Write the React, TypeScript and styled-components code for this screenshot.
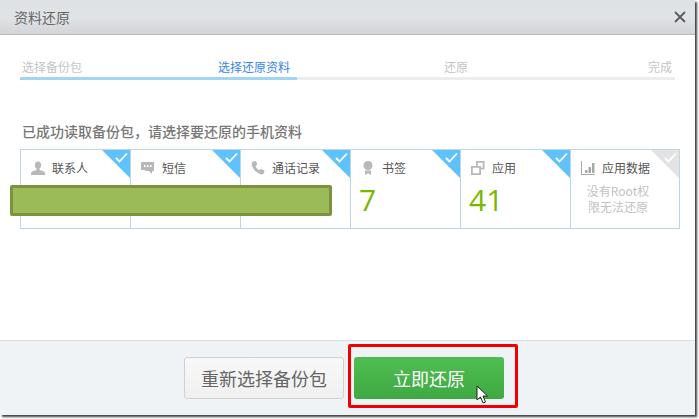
import React from "react";
import styled, { createGlobalStyle } from "styled-components";

const Global = createGlobalStyle`
  html, body {
    margin: 0;
    padding: 0;
    background: #fff;
    overflow: hidden;
  }
  body {
    width: 699px;
    height: 419px;
    font-family: "Noto Sans CJK SC", "Noto Sans", sans-serif;
  }
`;

const Window = styled.div`
  width: 695px;
  height: 415px;
  display: flex;
  flex-direction: column;
  background: #fff;
  box-shadow: 2px 2px 2px rgba(0, 0, 0, 0.75);
`;

const Header = styled.div`
  height: 34px;
  flex-shrink: 0;
  display: flex;
  align-items: center;
  justify-content: space-between;
  padding: 0 9px 0 14px;
  background: linear-gradient(#dfe2e5 0%, #e1e4e7 50%, #d2d4d6 100%);
  border-bottom: 1px solid #b4b9bb;
`;

const Title = styled.div`
  font-size: 14px;
  color: #666;
`;

const Close = styled.svg`
  width: 12px;
  height: 12px;
  display: block;
`;

const Body = styled.div`
  flex: 1;
  padding: 20px 20px 0;
  position: relative;
`;

const Steps = styled.div`
  display: grid;
  grid-template-columns: 196px 226px 204px 1fr;
  padding: 0 0 0 2px;
  height: 22px;
  align-items: center;
`;

const Step = styled.div<{ $active?: boolean }>`
  font-size: 12px;
  color: ${(p) => (p.$active ? "#3685ea" : "#c4c4c4")};
  white-space: nowrap;
`;

const Track = styled.div`
  height: 3px;
  background: #ededed;
`;

const TrackFill = styled.div`
  height: 100%;
  background: #a2d5f3;
`;

const Heading = styled.div`
  margin: 41px 0 0 2px;
  font-size: 14px;
  line-height: 20px;
  font-weight: 500;
  color: #777;
  white-space: nowrap;
`;

const Cards = styled.div`
  margin-top: 8px;
  display: flex;
  width: 660px;
`;

const Card = styled.div<{ $last?: boolean }>`
  width: 110px;
  height: 80px;
  box-sizing: border-box;
  border: 1px solid #bdd7e2;
  border-right-width: ${(p) => (p.$last ? "1px" : "0")};
  position: relative;
  overflow: hidden;
`;

const CardHead = styled.div`
  display: flex;
  align-items: center;
  height: 35px;
  padding-left: 9px;
  gap: 6px;
`;

const IconSlot = styled.svg`
  width: 16px;
  height: 16px;
  flex-shrink: 0;
  display: block;
`;

const CardName = styled.div`
  font-size: 12px;
  color: #555;
  white-space: nowrap;
`;

const Count = styled.div`
  font-family: "Open Sans", "Noto Sans", sans-serif;
  font-weight: 400;
  font-size: 30px;
  line-height: 30px;
  color: #7ab800;
  margin: 0 0 0 8px;
`;

const NoRoot = styled.div`
  font-size: 12px;
  line-height: 16px;
  color: #c2c2c2;
  text-align: center;
  padding: 0 28px 0 14px;
  margin-top: -2px;
`;

const Corner = styled.div<{ $off?: boolean }>`
  position: absolute;
  top: 0;
  right: 0;
  width: 28px;
  height: 28px;
  background: ${(p) => (p.$off ? "#e3e3e3" : "#60c2fd")};
  clip-path: polygon(0 0, 100% 0, 100% 100%);
`;

const Tick = styled.svg`
  position: absolute;
  top: 2px;
  right: 2px;
  width: 13px;
  height: 11px;
`;

const Redaction = styled.div`
  position: absolute;
  left: 10px;
  top: 150px;
  width: 322px;
  height: 31px;
  box-sizing: border-box;
  background: #9bbb59;
  border: 3px solid #7b933f;
  border-radius: 2px;
`;

const Footer = styled.div`
  height: 75px;
  flex-shrink: 0;
  box-sizing: border-box;
  display: flex;
  align-items: flex-start;
  gap: 10px;
  padding: 16px 0 0 184px;
  background: #f0f3f5;
  border-top: 1px solid #dcdfe1;
`;

const GhostButton = styled.div`
  width: 160px;
  height: 42px;
  box-sizing: border-box;
  display: flex;
  align-items: center;
  justify-content: center;
  font-size: 18px;
  color: #666;
  background: linear-gradient(#f8f8f8, #f0f0f0);
  border: 1px solid #cfd0d0;
  border-radius: 3px;
`;

const PrimaryButton = styled.div`
  width: 150px;
  height: 42px;
  display: flex;
  align-items: center;
  justify-content: center;
  font-size: 18px;
  color: #fff;
  background: linear-gradient(#4fbf52, #3fa842);
  border-radius: 3px;
  position: relative;
`;

const Highlight = styled.div`
  position: absolute;
  left: -6px;
  right: -14px;
  top: -13px;
  bottom: -9px;
  border: 3px solid #f00000;
  border-radius: 2px;
`;

const Pointer = styled.svg`
  position: absolute;
  left: 122px;
  top: 28px;
  width: 13px;
  height: 19px;
`;

const icons: Record<string, React.ReactNode> = {
  person: (
    <path d="M8 1.500c2 0 3.200 1.500 3.200 3.600 0 1.600-.8 3-1.700 3.700v1.200c2 .6 5 1.200 5.500 3V15H1v-2c.5-1.800 3.500-2.400 5.500-3V8.800C5.600 8.100 4.800 6.700 4.800 5.100 4.800 3 6 1.500 8 1.500z" fill="#b8b8b8" />
  ),
  chat: (
    <path fillRule="evenodd" d="M1 2h13v9h-2v3l-3-3H5v-1H1V2zm3 3v2h1.500V5H4zm3 0v2h1.500V5H7zm3 0v2h1.500V5H10z" fill="#b8b8b8" />
  ),
  phone: (
    <path d="M3 1.500 6 1l1.300 3.500L5.500 6c.6 1.700 2 3.300 3.800 4.300l1.500-1.500 3.700 2-.8 2.700c-.6.900-2 1.200-3.200.7C6 12.500 2.800 9 1.700 5 1.400 3.500 2 2.200 3 1.500z" fill="#b8b8b8" />
  ),
  medal: (
    <>
      <circle cx="8" cy="5.500" r="4.500" fill="#b8b8b8" />
      <path d="M5 10.500h6V15l-3-1.800L5 15z" fill="#b8b8b8" />
    </>
  ),
  apps: (
    <path fillRule="evenodd" d="M6 1h8.500v8.500H11V15H1V6h5V1zm1.800 5H11v1.800h1.700V2.800H7.800V6zM2.800 7.800v5.400h6.400V7.800H2.800z" fill="#b8b8b8" />
  ),
  chart: (
    <path d="M1 1h1v13h13v1H1V1zm4 9h2.500v3H5v-3zm3.500-3H11v6H8.500V7zM12 3h2.500v10H12V3z" fill="#a8a8a8" />
  ),
};

const items = [
  { name: "联系人", icon: "person" },
  { name: "短信", icon: "chat" },
  { name: "通话记录", icon: "phone" },
  { name: "书签", icon: "medal", count: 7 },
  { name: "应用", icon: "apps", count: 41 },
  { name: "应用数据", icon: "chart", off: true },
];

const App: React.FC = () => {
  return (
    <>
      <Global />
      <Window>
        <Header>
          <Title>资料还原</Title>
          <Close viewBox="0 0 12 12">
            <path d="M1 1l10 10M11 1 1 11" stroke="#5a5a5a" strokeWidth="1.800" />
          </Close>
        </Header>
        <Body>
          <Steps>
            <Step>选择备份包</Step>
            <Step $active>选择还原资料</Step>
            <Step>还原</Step>
            <Step>完成</Step>
          </Steps>
          <Track>
            <TrackFill style={{ width: `${(277 / 655) * 100}%` }} />
          </Track>
          <Heading>已成功读取备份包，请选择要还原的手机资料</Heading>
          <Cards>
            {items.map((item, idx) => (
              <Card key={item.name} $last={idx === items.length - 1}>
                <CardHead>
                  <IconSlot viewBox="0 0 16 16">{icons[item.icon]}</IconSlot>
                  <CardName>{item.name}</CardName>
                </CardHead>
                {item.count !== undefined && <Count>{item.count}</Count>}
                {item.off && <NoRoot>没有Root权限无法还原</NoRoot>}
                <Corner $off={item.off}>
                  <Tick viewBox="0 0 13 11">
                    <path d="M1 6l3.500 3.500L12 1.500" fill="none" stroke="#fff" strokeWidth="1.800" />
                  </Tick>
                </Corner>
              </Card>
            ))}
          </Cards>
          <Redaction />
        </Body>
        <Footer>
          <GhostButton>重新选择备份包</GhostButton>
          <PrimaryButton>
            立即还原
            <Highlight />
            <Pointer viewBox="0 0 13 19">
              <path d="M1 1v14l3.500-3 2.500 6 2.500-1-2.500-6h4.500z" fill="#fff" stroke="#222" strokeWidth="1" />
            </Pointer>
          </PrimaryButton>
        </Footer>
      </Window>
    </>
  );
};

export default App;
